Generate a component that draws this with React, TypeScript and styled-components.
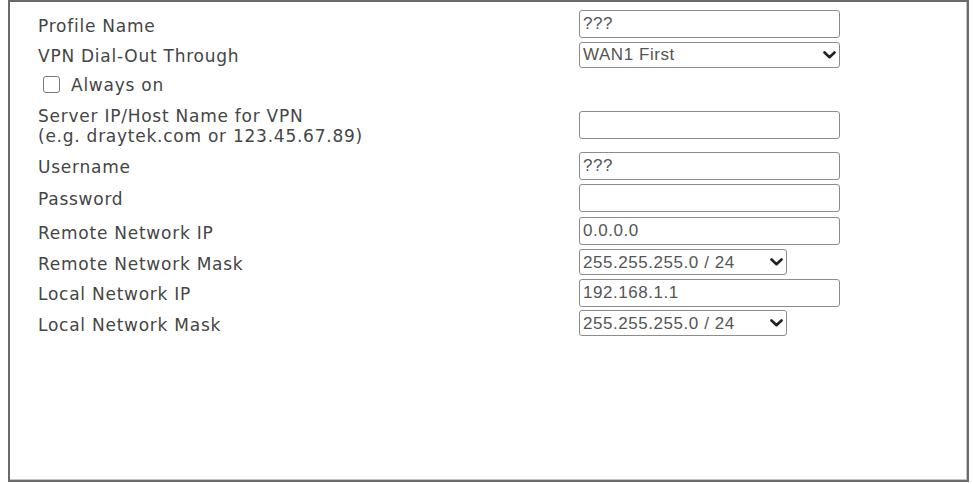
import React from "react";
import styled, { createGlobalStyle } from "styled-components";

const Global = createGlobalStyle`
  html, body { margin: 0; padding: 0; background: #fff; }
  body { width: 973px; height: 484px; overflow: hidden; }
`;

const Frame = styled.div`
  box-sizing: border-box;
  margin-left: 8px;
  width: 961px;
  height: 482px;
  border: 2px solid #6a6a6a;
  box-shadow: inset -1px -1px 0 #c4c4c4;
  padding-top: 7px;
`;

const Row = styled.div<{ $h: number }>`
  display: grid;
  grid-template-columns: 569px 1fr;
  align-items: center;
  height: ${(p) => p.$h}px;
`;

const Label = styled.div`
  padding-left: 28px;
  padding-top: 3px;
  font-family: "DejaVu Sans", Verdana, sans-serif;
  font-size: 17px;
  letter-spacing: 0.75px;
  line-height: 20px;
  color: #454545;
  white-space: nowrap;
`;

const CheckLabel = styled.label`
  display: flex;
  align-items: center;
  gap: 11px;
  padding-left: 33px;
  font-family: "DejaVu Sans", Verdana, sans-serif;
  font-size: 17px;
  letter-spacing: 0.75px;
  color: #454545;
`;

const Check = styled.input`
  appearance: none;
  margin: 0;
  width: 17px;
  height: 17px;
  box-sizing: border-box;
  border: 1px solid #7a7a7a;
  border-radius: 3px;
  background: #fff;
`;

const TextInput = styled.input`
  display: block;
  box-sizing: border-box;
  width: 261px;
  height: 28px;
  margin: 0;
  border: 1px solid #8c8c8c;
  border-radius: 3px;
  padding: 0 0 0 3px;
  font-family: "Liberation Sans", Arial, sans-serif;
  font-size: 17px;
  letter-spacing: 0.55px;
  color: #555;
  background: #fff;
  outline: none;
`;

const SelectWrap = styled.div<{ $w: number }>`
  position: relative;
  width: ${(p) => p.$w}px;
  height: 26px;
`;

const Select = styled.select`
  appearance: none;
  display: block;
  box-sizing: border-box;
  width: 100%;
  height: 100%;
  margin: 0;
  border: 1px solid #8c8c8c;
  border-radius: 3px;
  padding: 0 0 0 3px;
  font-family: "Liberation Sans", Arial, sans-serif;
  font-size: 17px;
  letter-spacing: 0.55px;
  color: #555;
  background: #fff;
  outline: none;
`;

const Chevron = styled.svg`
  position: absolute;
  right: 4px;
  top: 50%;
  margin-top: -4px;
  width: 13px;
  height: 8px;
  pointer-events: none;
`;

function DropDown({ w, value }: { w: number; value: string }) {
  return (
    <SelectWrap $w={w}>
      <Select defaultValue={value}>
        <option>{value}</option>
      </Select>
      <Chevron viewBox="0 0 13 8">
        <path d="M1.5 1.5 L6.5 6.2 L11.5 1.5" fill="none" stroke="#222" strokeWidth="2.6" strokeLinecap="round" strokeLinejoin="round" />
      </Chevron>
    </SelectWrap>
  );
}

export default function App() {
  return (
    <>
      <Global />
      <Frame>
        <Row $h={30}>
          <Label>Profile Name</Label>
          <TextInput readOnly defaultValue="???" />
        </Row>
        <Row $h={31}>
          <Label>VPN Dial-Out Through</Label>
          <DropDown w={261} value="WAN1 First" />
        </Row>
        <Row $h={29}>
          <CheckLabel>
            <Check type="checkbox" />
            Always on
          </CheckLabel>
          <div />
        </Row>
        <Row $h={51}>
          <Label>
            Server IP/Host Name for VPN
            <br />
            (e.g. draytek.com or 123.45.67.89)
          </Label>
          <TextInput readOnly defaultValue="" />
        </Row>
        <Row $h={31}>
          <Label>Username</Label>
          <TextInput readOnly defaultValue="???" />
        </Row>
        <Row $h={33}>
          <Label>Password</Label>
          <TextInput readOnly defaultValue="" />
        </Row>
        <Row $h={34}>
          <Label>Remote Network IP</Label>
          <TextInput readOnly defaultValue="0.0.0.0" />
        </Row>
        <Row $h={28}>
          <Label>Remote Network Mask</Label>
          <DropDown w={208} value="255.255.255.0 / 24" />
        </Row>
        <Row $h={33}>
          <Label>Local Network IP</Label>
          <TextInput readOnly defaultValue="192.168.1.1" />
        </Row>
        <Row $h={28}>
          <Label>Local Network Mask</Label>
          <DropDown w={208} value="255.255.255.0 / 24" />
        </Row>
      </Frame>
    </>
  );
}
